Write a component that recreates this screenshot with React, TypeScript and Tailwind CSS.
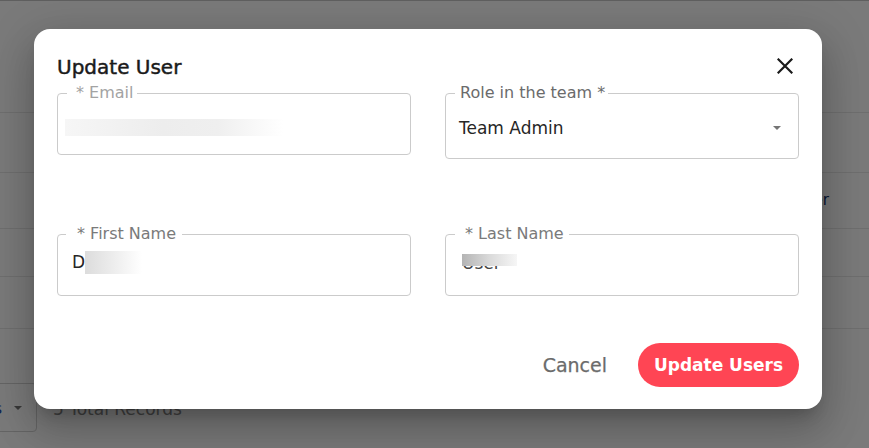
import React from "react";

function Caret() {
  return (
    <svg width="8" height="4" viewBox="0 0 8 4" className="shrink-0">
      <path d="M0 0 L8 0 L4 4 Z" fill="#757575" />
    </svg>
  );
}

export default function App() {
  return (
    <div className="relative h-[448px] w-[869px] overflow-hidden bg-white font-['DejaVu_Sans',sans-serif]">
      {/* underlying page */}
      <div className="flex flex-col border-t border-[#c6c6c6]">
        <div className="h-[112px] border-b border-[#e9e9e9]" />
        <div className="h-[60px] border-b border-[#e9e9e9]" />
        <div className="flex h-[56px] items-center justify-end border-b border-[#e9e9e9] pr-[40px] text-[15px] text-[#10306a]">
          Member
        </div>
        <div className="h-[48px] border-b border-[#e9e9e9]" />
        <div className="h-[52px] border-b border-[#e9e9e9]" />
        <div className="mt-[54px] flex h-[49px] items-center gap-[16px]">
          <div className="-ml-[60px] flex h-full w-[97px] items-center justify-end gap-[12px] rounded-[4px] border border-[#d4d4d4] pr-[14px]">
            <span className="pt-[3px] text-[16px] text-[#1e4fb0]">Rows</span>
            <Caret />
          </div>
          <span className="pt-[4px] text-[17px] text-[#8a8a8a]">5 Total Records</span>
        </div>
      </div>

      {/* overlay */}
      <div className="absolute inset-0 bg-black/[0.52]" />

      {/* modal */}
      <div className="absolute left-[34px] top-[29px] flex h-[380px] w-[788px] flex-col rounded-2xl bg-white px-[23px] pb-[22px] pt-[23px] shadow-[0_11px_15px_-7px_rgba(0,0,0,0.2),0_24px_38px_3px_rgba(0,0,0,0.14),0_9px_46px_8px_rgba(0,0,0,0.12)]">
        <div className="flex h-[28px] items-center justify-between">
          <h2 className="mt-[2px] text-[20px] leading-[28px] text-[#1a1a1a] [-webkit-text-stroke:0.45px_#1a1a1a]">Update User</h2>
          <svg width="16" height="16" viewBox="0 0 16 16" className="mr-[6px]">
            <path d="M1.5 1.5 L14.5 14.5 M14.5 1.5 L1.5 14.5" stroke="#1a1a1a" strokeWidth="2.2" strokeLinecap="square" />
          </svg>
        </div>

        <div className="mt-[5px] grid grid-cols-2 items-start gap-x-[34px] gap-y-[67px]">
          {/* Email */}
          <fieldset className="h-[70px] rounded-[4px] border border-[#cbcbcb]">
            <legend className="ml-[9px] pl-[9px] pr-[4px] text-[16px] leading-[16px] text-[#a3a3a3]">* Email</legend>
            <div className="ml-[7px] mt-[18px] h-[17px] w-[218px] bg-[linear-gradient(90deg,#f6f6f6,#ededed_45%,#efefef_70%,#ffffff)]" />
          </fieldset>

          {/* Role */}
          <fieldset className="h-[74px] rounded-[4px] border border-[#cbcbcb]">
            <legend className="ml-[9px] pl-[5px] pr-[3px] text-[16px] leading-[16px] text-[#6b6b6b]">Role in the team *</legend>
            <div className="mt-[15px] flex items-center justify-between pl-[13px] pr-[17px]">
              <span className="text-[17px] leading-[24px] text-[#262626]">Team Admin</span>
              <Caret />
            </div>
          </fieldset>

          {/* First Name */}
          <fieldset className="h-[70px] rounded-[4px] border border-[#cbcbcb]">
            <legend className="ml-[8px] pl-[11px] pr-[6px] text-[16px] leading-[16px] text-[#7a7a7a]">* First Name</legend>
            <div className="mt-[8px] flex items-center pl-[14px]">
              <span className="text-[17px] leading-[24px] text-[#262626]">D</span>
              <div className="h-[23px] w-[57px] bg-[linear-gradient(90deg,#dcdcdc,#ededed_50%,#ffffff)]" />
            </div>
          </fieldset>

          {/* Last Name */}
          <fieldset className="h-[70px] rounded-[4px] border border-[#cbcbcb]">
            <legend className="ml-[9px] pl-[10px] pr-[5px] text-[16px] leading-[16px] text-[#7a7a7a]">* Last Name</legend>
            <div className="relative ml-[16px] mt-[9px] w-[56px]">
              <span className="block text-[17px] leading-[24px] text-[#444]">User</span>
              <div className="absolute left-0 top-[3px] h-[12px] w-[55px] bg-[linear-gradient(90deg,#b4b4b4,#dadada_50%,#f6f6f6)]" />
            </div>
          </fieldset>
        </div>

        <div className="mt-[47px] flex items-center justify-end gap-[31px]">
          <span className="pt-[1px] text-[19px] text-[#6b6b6b] [-webkit-text-stroke:0.25px_#6b6b6b]">Cancel</span>
          <button className="flex h-[44px] w-[161px] items-center justify-center rounded-full bg-[#ff4554] pt-[2px] text-[17px] font-bold text-white">
            Update Users
          </button>
        </div>
      </div>
    </div>
  );
}
